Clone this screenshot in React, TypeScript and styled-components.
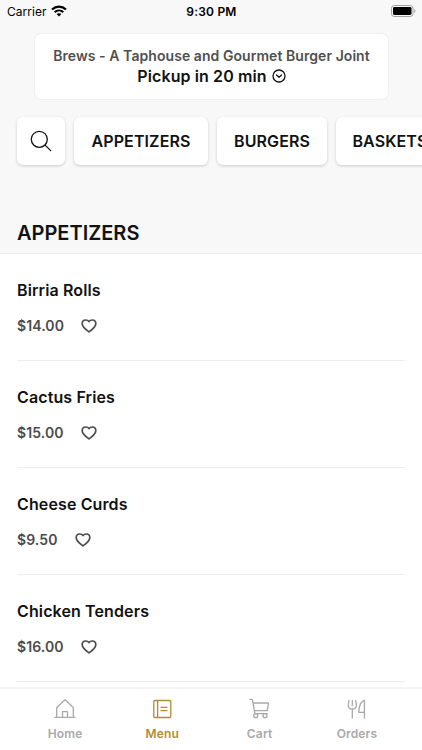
import React from "react";
import styled, { createGlobalStyle } from "styled-components";

const GlobalStyle = createGlobalStyle`
  * { box-sizing: border-box; }
  html, body { margin: 0; padding: 0; overflow: hidden; background: #fff; }
  button { font: inherit; color: inherit; border: 0; padding: 0; background: none; }
`;

const Screen = styled.div`
  width: 422px;
  height: 750px;
  display: flex;
  flex-direction: column;
  overflow: hidden;
  background: #fff;
  color: #111213;
  font-family: Inter, "Liberation Sans", sans-serif;
  font-weight: 600;
  white-space: nowrap;
`;

const Header = styled.header`
  flex: none;
  height: 254px;
  display: flex;
  flex-direction: column;
  background: #f8f8f8;
  border-bottom: 1px solid #eeeeee;
`;

const StatusBar = styled.div`
  height: 22px;
  flex: none;
  display: grid;
  grid-template-columns: 1fr auto 1fr;
  align-items: center;
  padding: 0 6px 0 7px;
  color: #000;
  font-size: 12px;
`;

const Carrier = styled.div`
  display: flex;
  align-items: center;
  gap: 4px;
  font-weight: 400;
  letter-spacing: 0.05px;
`;

const Clock = styled.div`
  letter-spacing: 0.2px;
`;

const Battery = styled.svg`
  justify-self: end;
  margin-top: -1px;
`;

const PickupCard = styled.button`
  flex: none;
  width: 353px;
  height: 65px;
  margin: 12px auto 0 35px;
  padding-bottom: 1px;
  display: flex;
  flex-direction: column;
  align-items: center;
  justify-content: center;
  background: #fff;
  border-radius: 6px;
  box-shadow: 0 0 2px rgba(0, 0, 0, 0.13);
`;

const Venue = styled.div`
  font-size: 14px;
  line-height: 20px;
  font-weight: 600;
  letter-spacing: 0.06px;
  color: #505050;
`;

const PickupTime = styled.div`
  display: flex;
  align-items: center;
  gap: 5px;
  font-size: 16px;
  line-height: 20px;
  letter-spacing: 0.1px;
  color: #111213;
`;

const CategoryBar = styled.nav`
  flex: none;
  display: flex;
  gap: 9px;
  margin-top: 18px;
  padding: 0 0 8px 17px;
  overflow-x: clip;
`;

const CategoryButton = styled.button<{ $width: number }>`
  flex: none;
  width: ${(p) => p.$width}px;
  height: 48px;
  display: flex;
  align-items: center;
  justify-content: center;
  background: #fff;
  border-radius: 6px;
  box-shadow: 0 1px 3px rgba(0, 0, 0, 0.18);
  font-size: 16px;
  letter-spacing: 0.1px;
`;

const SectionTitle = styled.h2`
  margin: auto 0 7px 17px;
  font-size: 20px;
  line-height: 26px;
  font-weight: 600;
`;

const MenuList = styled.main`
  flex: 1;
  min-height: 0;
  overflow: hidden;
  padding: 0 17px;
`;

const MenuItem = styled.article`
  height: 107px;
  padding-top: 25px;
  border-bottom: 1px solid #ededed;
`;

const ItemName = styled.h3`
  margin: 0;
  font-size: 16px;
  line-height: 22px;
  font-weight: 600;
  letter-spacing: 0.12px;
`;

const PriceRow = styled.div`
  display: flex;
  align-items: center;
  gap: 17px;
  margin-top: 14px;
  font-size: 14px;
  line-height: 22px;
  font-weight: 600;
  letter-spacing: 0.1px;
  color: #4c4c4c;
`;

const TabBar = styled.footer`
  flex: none;
  height: 63px;
  display: grid;
  grid-template-columns: repeat(4, 97.3px);
  justify-content: center;
  background: #fff;
  border-top: 2px solid #f4f4f4;
`;

const Tab = styled.button<{ $active?: boolean }>`
  display: flex;
  flex-direction: column;
  align-items: center;
  padding-top: 9px;
  color: ${(p) => (p.$active ? "#b58c36" : "#a9a9a9")};
`;

const TabLabel = styled.span`
  margin-top: 6px;
  font-size: 12px;
  line-height: 16px;
  letter-spacing: 0.15px;
`;

const Stroke = styled.svg`
  fill: none;
  stroke: currentColor;
  stroke-width: 1.3;
  stroke-linejoin: round;
  stroke-linecap: round;
  flex: none;
  display: block;
`;

const WifiIcon = () => (
  <svg width="16" height="12" viewBox="0 0 16 12" fill="none" stroke="#000" strokeWidth="2.1">
    <path d="M1 4.5C5 .7 11 .7 15 4.5" />
    <path d="M3.7 7.1c2.5-2.2 6.1-2.2 8.6 0" />
    <path d="M8 11.6 5.6 9.1c1.4-1.2 3.4-1.2 4.8 0Z" fill="#000" stroke="none" />
  </svg>
);

const BatteryIcon = () => (
  <Battery width="25" height="12" viewBox="0 0 25 12">
    <rect x=".5" y=".5" width="21.5" height="11" rx="2.8" fill="none" stroke="#a2a2a2" />
    <rect x="2" y="2" width="18.5" height="8" rx="1.4" fill="#000" />
    <path d="M23.3 4v4c1.4-.6 1.4-3.4 0-4Z" fill="#999" />
  </Battery>
);

const ChevronCircle = () => (
  <Stroke width="14" height="14" viewBox="0 0 14 14">
    <circle cx="7" cy="7" r="6" />
    <path d="m4.5 6 2.5 2.3L9.5 6" />
  </Stroke>
);

const SearchIcon = () => (
  <Stroke width="22" height="22" viewBox="0 0 22 22">
    <circle cx="9.3" cy="9.3" r="8" />
    <path d="m15.1 15.1 5.6 5.5" />
  </Stroke>
);

const HeartIcon = () => (
  <Stroke width="16" height="14" viewBox="0 0 16 14">
    <path
      strokeWidth="1.7"
      d="M8 12.9C4.5 10.4 1.2 7.9 1.2 4.7 1.2 2.5 2.7 1 4.6 1 6 1 7.3 1.4 8 2.7 8.7 1.4 10 1 11.4 1c1.9 0 3.4 1.5 3.4 3.7 0 3.2-3.3 5.7-6.8 8.2Z"
    />
  </Stroke>
);

const HomeIcon = () => (
  <Stroke width="22" height="22" viewBox="0 0 22 22">
    <path d="M.8 19.3h20.4M2.7 19.3V9.5L11 1.8l8.3 7.7v9.8M8.5 19.3v-5.6h5v5.6" />
  </Stroke>
);

const MenuIcon = () => (
  <Stroke width="22" height="22" viewBox="0 0 22 22">
    <rect x="2.8" y="2.5" width="17" height="17" rx="1" />
    <path d="M6.6 2.5v17M10 9.3h6M10 12.7h6" />
  </Stroke>
);

const CartIcon = () => (
  <Stroke width="22" height="22" viewBox="0 0 22 22">
    <path d="M.8 1.3h2.5l2.6 14.4h12.3M4 5h15.5l-1.2 7.7H5.4" />
    <circle cx="6.7" cy="17.7" r="2" />
    <circle cx="16" cy="17.7" r="2" />
  </Stroke>
);

const UtensilsIcon = () => (
  <Stroke width="22" height="22" viewBox="0 0 22 22">
    <path d="M6.3 20v-9M2.8 2.5 2.3 7.5c0 2.3 1.7 3.5 4 3.5s4-1.2 4-3.5l-.5-5M6.3 2.5V7.5M18.4 20V2.3c-3.3.4-5.6 5.8-5.6 12h5.6" />
  </Stroke>
);

const categories = [
  { label: "APPETIZERS", width: 134 },
  { label: "BURGERS", width: 110 },
  { label: "BASKETS", width: 108 },
];

const items = [
  { name: "Birria Rolls", price: "$14.00" },
  { name: "Cactus Fries", price: "$15.00" },
  { name: "Cheese Curds", price: "$9.50" },
  { name: "Chicken Tenders", price: "$16.00" },
];

const tabs = [
  { label: "Home", Icon: HomeIcon },
  { label: "Menu", Icon: MenuIcon },
  { label: "Cart", Icon: CartIcon },
  { label: "Orders", Icon: UtensilsIcon },
];

export default function App() {
  return (
    <>
      <GlobalStyle />
      <Screen>
        <Header>
          <StatusBar>
            <Carrier>
              Carrier <WifiIcon />
            </Carrier>
            <Clock>9:30 PM</Clock>
            <BatteryIcon />
          </StatusBar>
          <PickupCard>
            <Venue>Brews - A Taphouse and Gourmet Burger Joint</Venue>
            <PickupTime>
              Pickup in 20 min <ChevronCircle />
            </PickupTime>
          </PickupCard>
          <CategoryBar>
            <CategoryButton $width={48} aria-label="Search">
              <SearchIcon />
            </CategoryButton>
            {categories.map((c) => (
              <CategoryButton key={c.label} $width={c.width}>
                {c.label}
              </CategoryButton>
            ))}
          </CategoryBar>
          <SectionTitle>APPETIZERS</SectionTitle>
        </Header>
        <MenuList>
          {items.map((item) => (
            <MenuItem key={item.name}>
              <ItemName>{item.name}</ItemName>
              <PriceRow>
                {item.price}
                <HeartIcon />
              </PriceRow>
            </MenuItem>
          ))}
        </MenuList>
        <TabBar>
          {tabs.map(({ label, Icon }) => (
            <Tab key={label} $active={label === "Menu"}>
              <Icon />
              <TabLabel>{label}</TabLabel>
            </Tab>
          ))}
        </TabBar>
      </Screen>
    </>
  );
}
